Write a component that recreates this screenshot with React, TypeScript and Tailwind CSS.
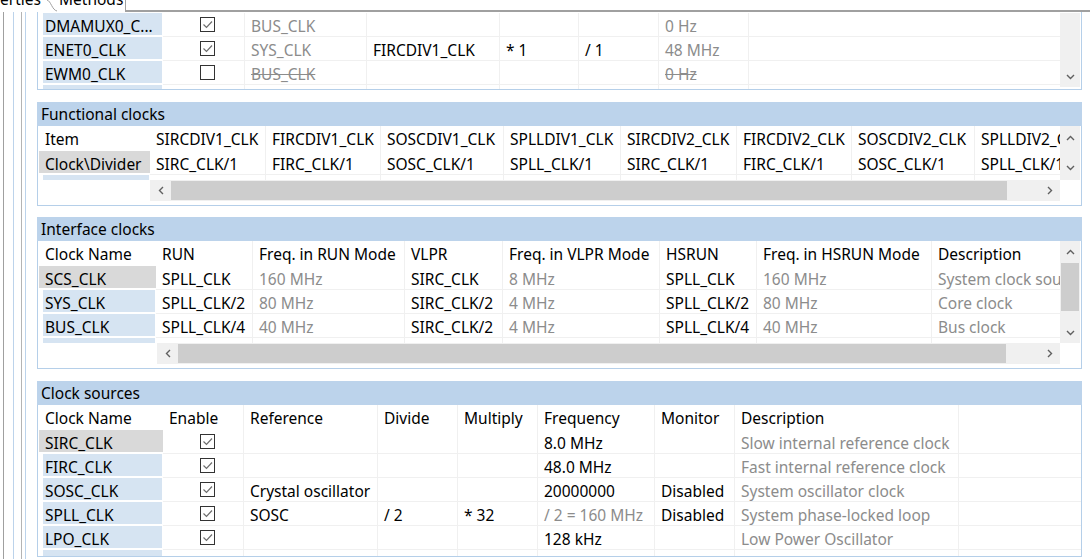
import type { ReactNode } from 'react'

// 공통 색
const LINE = 'border-[#f0f0f0]'
const GRAY = 'text-[#8c8c8c]'

type Tone = 'black' | 'gray' | 'strike'
type Dir = 'up' | 'down' | 'left' | 'right'

function toneClass(t?: Tone) {
  if (t === 'gray') return GRAY
  if (t === 'strike') return `${GRAY} line-through`
  return 'text-black'
}

function Chevron({ dir }: { dir: Dir }) {
  const flat = dir === 'up' || dir === 'down'
  const pts = { up: '1,5 4.5,1.5 8,5', down: '1,1 4.5,4.5 8,1', left: '5,1 1.5,4.5 5,8', right: '1,1 4.5,4.5 1,8' }[dir]
  return (
    <svg width={flat ? 9 : 6} height={flat ? 6 : 9} viewBox={flat ? '0 0 9 6' : '0 0 6 9'}>
      <polyline points={pts} fill="none" stroke="#606060" strokeWidth="1.4" />
    </svg>
  )
}

function Btn({ dir, className }: { dir: Dir; className: string }) {
  return (
    <div className={`flex shrink-0 items-center justify-center ${className}`}>
      <Chevron dir={dir} />
    </div>
  )
}

function Check({ on }: { on: boolean }) {
  return (
    <span className="flex h-[15px] w-[15px] items-center justify-center border border-[#333] bg-white">
      {on && (
        <svg width="11" height="9" viewBox="0 0 11 9">
          <polyline points="1.5,4.5 4.5,7.5 10,1.5" fill="none" stroke="#6e6e6e" strokeWidth="1.2" />
        </svg>
      )}
    </span>
  )
}

function Cell({ w, children, tone, head, noRight }: { w: string; children?: ReactNode; tone?: Tone; head?: boolean; noRight?: boolean }) {
  return (
    <div
      className={`${w} flex shrink-0 items-center overflow-hidden whitespace-nowrap pl-[6px] ${noRight ? '' : 'border-r'} ${head ? '' : 'border-b pt-[2px]'} ${LINE} ${toneClass(tone)}`}
    >
      {children}
    </div>
  )
}

function CheckCell({ w, on }: { w: string; on: boolean }) {
  return (
    <div className={`${w} flex shrink-0 items-center border-r border-b ${LINE} pl-[37px]`}>
      <Check on={on} />
    </div>
  )
}

// 이름 칸: 선택된 행은 회색, 나머지는 옅은 파랑
function NameCell({ w, sel, children }: { w: string; sel?: boolean; children?: ReactNode }) {
  return (
    <div className={`${w} flex shrink-0 pb-[2px] ${sel ? 'pl-[1px]' : 'pl-[5px] pr-[1px]'}`}>
      <div
        className={`flex min-w-0 flex-1 items-center overflow-hidden whitespace-nowrap pt-[3px] ${sel ? 'bg-[#d9d9d9] pl-[6px]' : 'bg-[#d6e4f2] pl-[2px]'}`}
      >
        {children}
      </div>
    </div>
  )
}

// 스크롤로 잘린 마지막 행
function PartialRow({ cols, h }: { cols: string[]; h: string }) {
  return (
    <div className={`flex ${h} overflow-hidden`}>
      <div className={`${cols[0]} flex shrink-0 pl-[5px] pr-[1px]`}>
        <div className="flex-1 bg-[#d6e4f2]" />
      </div>
      {cols.slice(1).map((w, i) => (
        <div key={i} className={`${w} shrink-0 ${i === cols.length - 2 ? '' : 'border-r'} ${LINE}`} />
      ))}
    </div>
  )
}

function Section({ title, children }: { title: string; children: ReactNode }) {
  return (
    <div className="flex flex-col">
      <div className="flex h-[24px] items-center bg-[#bcd3eb] pl-[4px]">{title}</div>
      <div className="flex flex-col border-x border-b border-[#b5cfe9]">{children}</div>
    </div>
  )
}

/* ---------- 위쪽 peripheral 표 ---------- */
const TOP_COLS = ['w-[125px]', 'w-[82px]', 'w-[122px]', 'w-[133px]', 'w-[79px]', 'w-[80px]', 'w-[90px]', 'w-[311px]']
const TOP_ROWS = [
  { name: 'DMAMUX0_C...', on: true, src: 'BUS_CLK', ref: '', mul: '', div: '', freq: '0 Hz', off: false },
  { name: 'ENET0_CLK', on: true, src: 'SYS_CLK', ref: 'FIRCDIV1_CLK', mul: '* 1', div: '/ 1', freq: '48 MHz', off: false },
  { name: 'EWM0_CLK', on: false, src: 'BUS_CLK', ref: '', mul: '', div: '', freq: '0 Hz', off: true },
]

function TopTable() {
  const c = TOP_COLS
  return (
    <div className="flex flex-col border-x border-b border-[#b5cfe9]">
      <div className="flex">
        <div className="flex w-[1022px] flex-col">
          <div className="h-[1px]" />
          {TOP_ROWS.map((r) => (
            <div key={r.name} className="flex h-[24px]">
              <NameCell w={c[0]}>{r.name}</NameCell>
              <CheckCell w={c[1]} on={r.on} />
              <Cell w={c[2]} tone={r.off ? 'strike' : 'gray'}>{r.src}</Cell>
              <Cell w={c[3]}>{r.ref}</Cell>
              <Cell w={c[4]}>{r.mul}</Cell>
              <Cell w={c[5]}>{r.div}</Cell>
              <Cell w={c[6]} tone={r.off ? 'strike' : 'gray'}>{r.freq}</Cell>
              <Cell w={c[7]} noRight />
            </div>
          ))}
          <PartialRow cols={c} h="h-[4px]" />
        </div>
        <div className="mt-[1px] flex h-[74px] w-[20px] flex-col justify-end bg-[#f0f0f0]">
          <Btn dir="down" className="h-[21px]" />
        </div>
      </div>
    </div>
  )
}

/* ---------- Functional clocks ---------- */
const FN_COLS = ['w-[112px]', 'w-[116px]', 'w-[115px]', 'w-[123px]', 'w-[117px]', 'w-[116px]', 'w-[115px]', 'w-[123px]', 'w-[85px]']
const FN_ITEMS = ['SIRCDIV1_CLK', 'FIRCDIV1_CLK', 'SOSCDIV1_CLK', 'SPLLDIV1_CLK', 'SIRCDIV2_CLK', 'FIRCDIV2_CLK', 'SOSCDIV2_CLK', 'SPLLDIV2_CLK']
const FN_VALUES = ['SIRC_CLK/1', 'FIRC_CLK/1', 'SOSC_CLK/1', 'SPLL_CLK/1', 'SIRC_CLK/1', 'FIRC_CLK/1', 'SOSC_CLK/1', 'SPLL_CLK/1']

function FunctionalClocks() {
  const c = FN_COLS
  return (
    <Section title="Functional clocks">
      <div className="flex">
        <div className="flex w-[1022px] flex-col">
          <div className="flex h-[25px]">
            <div className={`${c[0]} flex shrink-0 items-center pl-[7px]`}>Item</div>
            {FN_ITEMS.map((t, i) => (
              <Cell key={i} w={c[i + 1]} head noRight={i === FN_ITEMS.length - 1}>
                {t}
              </Cell>
            ))}
          </div>
          <div className="flex h-[24px]">
            <NameCell w={c[0]} sel>
              Clock\Divider
            </NameCell>
            {FN_VALUES.map((t, i) => (
              <Cell key={i} w={c[i + 1]} noRight={i === FN_VALUES.length - 1}>
                {t}
              </Cell>
            ))}
          </div>
          <PartialRow cols={c} h="h-[5px]" />
        </div>
        <div className="flex h-[54px] w-[20px] flex-col justify-between bg-[#f0f0f0]">
          <Btn dir="up" className="h-[24px]" />
          <Btn dir="down" className="h-[24px]" />
        </div>
      </div>
      <div className="flex h-[21px]">
        <div className="w-[112px] shrink-0" />
        <div className="flex w-[910px] shrink-0 bg-[#f0f0f0]">
          <Btn dir="left" className="w-[21px]" />
          <div className="my-[1px] w-[836px] shrink-0 bg-[#cdcdcd]" />
          <div className="flex-1" />
          <Btn dir="right" className="w-[21px]" />
        </div>
      </div>
      <div className="h-[4px]" />
    </Section>
  )
}

/* ---------- Interface clocks ---------- */
const IF_COLS = ['w-[118px]', 'w-[97px]', 'w-[152px]', 'w-[98px]', 'w-[157px]', 'w-[97px]', 'w-[175px]', 'w-[128px]']
const IF_HEAD = ['RUN', 'Freq. in RUN Mode', 'VLPR', 'Freq. in VLPR Mode', 'HSRUN', 'Freq. in HSRUN Mode', 'Description']
const IF_ROWS = [
  { name: 'SCS_CLK', v: ['SPLL_CLK', '160 MHz', 'SIRC_CLK', '8 MHz', 'SPLL_CLK', '160 MHz', 'System clock source'] },
  { name: 'SYS_CLK', v: ['SPLL_CLK/2', '80 MHz', 'SIRC_CLK/2', '4 MHz', 'SPLL_CLK/2', '80 MHz', 'Core clock'] },
  { name: 'BUS_CLK', v: ['SPLL_CLK/4', '40 MHz', 'SIRC_CLK/2', '4 MHz', 'SPLL_CLK/4', '40 MHz', 'Bus clock'] },
]

function InterfaceClocks() {
  const c = IF_COLS
  return (
    <Section title="Interface clocks">
      <div className="flex">
        <div className="flex w-[1022px] flex-col">
          <div className="flex h-[25px]">
            <div className={`${c[0]} flex shrink-0 items-center pl-[7px]`}>Clock Name</div>
            {IF_HEAD.map((t, i) => (
              <Cell key={t} w={c[i + 1]} head noRight={i === IF_HEAD.length - 1}>
                {t}
              </Cell>
            ))}
          </div>
          {IF_ROWS.map((r, ri) => (
            <div key={r.name} className="flex h-[24px]">
              <NameCell w={c[0]} sel={ri === 0}>
                {r.name}
              </NameCell>
              {r.v.map((t, i) => (
                <Cell key={i} w={c[i + 1]} tone={i % 2 === 1 || i === 6 ? 'gray' : 'black'} noRight={i === 6}>
                  {t}
                </Cell>
              ))}
            </div>
          ))}
          <PartialRow cols={c} h="h-[5px]" />
        </div>
        <div className="flex h-[102px] w-[20px] flex-col bg-[#f0f0f0]">
          <Btn dir="up" className="h-[21px]" />
          <div className="mx-[1px] mt-[1px] h-[48px] bg-[#cdcdcd]" />
          <div className="flex-1" />
          <Btn dir="down" className="h-[21px]" />
        </div>
      </div>
      <div className="flex h-[21px]">
        <div className="w-[119px] shrink-0" />
        <div className="flex w-[903px] shrink-0 bg-[#f0f0f0]">
          <Btn dir="left" className="w-[21px]" />
          <div className="my-[1px] w-[828px] shrink-0 bg-[#cdcdcd]" />
          <div className="flex-1" />
          <Btn dir="right" className="w-[21px]" />
        </div>
      </div>
      <div className="h-[4px]" />
    </Section>
  )
}

/* ---------- Clock sources ---------- */
const CS_COLS = ['w-[125px]', 'w-[81px]', 'w-[134px]', 'w-[80px]', 'w-[80px]', 'w-[117px]', 'w-[80px]', 'w-[224px]', 'w-[122px]']
const CS_HEAD = ['Enable', 'Reference', 'Divide', 'Multiply', 'Frequency', 'Monitor', 'Description']
const CS_ROWS = [
  { name: 'SIRC_CLK', ref: '', div: '', mul: '', freq: '8.0 MHz', fg: false, mon: '', desc: 'Slow internal reference clock' },
  { name: 'FIRC_CLK', ref: '', div: '', mul: '', freq: '48.0 MHz', fg: false, mon: '', desc: 'Fast internal reference clock' },
  { name: 'SOSC_CLK', ref: 'Crystal oscillator', div: '', mul: '', freq: '20000000', fg: false, mon: 'Disabled', desc: 'System oscillator clock' },
  { name: 'SPLL_CLK', ref: 'SOSC', div: '/ 2', mul: '* 32', freq: '/ 2 = 160 MHz', fg: true, mon: 'Disabled', desc: 'System phase-locked loop' },
  { name: 'LPO_CLK', ref: '', div: '', mul: '', freq: '128 kHz', fg: false, mon: '', desc: 'Low Power Oscillator' },
]

function ClockSources() {
  const c = CS_COLS
  return (
    <Section title="Clock sources">
      <div className="flex h-[25px]">
        <div className={`${c[0]} flex shrink-0 items-center pl-[7px]`}>Clock Name</div>
        {CS_HEAD.map((t, i) => (
          <Cell key={t} w={c[i + 1]} head>
            {t}
          </Cell>
        ))}
        <div className={`${c[8]} shrink-0`} />
      </div>
      {CS_ROWS.map((r, ri) => (
        <div key={r.name} className="flex h-[24px]">
          <NameCell w={c[0]} sel={ri === 0}>
            {r.name}
          </NameCell>
          <CheckCell w={c[1]} on />
          <Cell w={c[2]}>{r.ref}</Cell>
          <Cell w={c[3]}>{r.div}</Cell>
          <Cell w={c[4]}>{r.mul}</Cell>
          <Cell w={c[5]} tone={r.fg ? 'gray' : 'black'}>
            {r.freq}
          </Cell>
          <Cell w={c[6]}>{r.mon}</Cell>
          <Cell w={c[7]} tone="gray">
            {r.desc}
          </Cell>
          <Cell w={c[8]} noRight />
        </div>
      ))}
      <PartialRow cols={c} h="h-[6px]" />
    </Section>
  )
}

export default function App() {
  return (
    <div className="flex h-[559px] w-[1090px] flex-col overflow-hidden bg-white font-['Noto_Sans',sans-serif] text-[15.5px] leading-[20px] text-black">
      {/* 탭 줄 (위가 잘려 있음) */}
      <div className="flex h-[12px] shrink-0">
        <div className="w-[47px] shrink-0 overflow-hidden">
          <div className="-mt-[11px] whitespace-nowrap">erties</div>
        </div>
        <svg width="10" height="12" viewBox="0 0 10 12" className="shrink-0">
          <path d="M0 0 C4 1, 5 10, 10 11" fill="none" stroke="#a0a0a0" strokeWidth="1" />
        </svg>
        <div className="w-[68px] shrink-0 overflow-hidden pl-[2px]">
          <div className="-mt-[11px] whitespace-nowrap">Methods</div>
        </div>
        <div className="flex-1 border-b-2 border-l border-[#a0a0a0]" />
      </div>

      <div className="flex min-h-0 flex-1">
        {/* 왼쪽 중첩 패널 테두리들 */}
        <div className="flex shrink-0">
          <div className="w-[3px]" />
          <div className="w-px bg-[#a0a0a0]" />
          <div className="w-[9px]" />
          <div className="w-px bg-[#bcd3eb]" />
          <div className="w-[7px]" />
          <div className="w-px bg-[#b4b4b4]" />
          <div className="w-[3px]" />
          <div className="w-px bg-[#bcd3eb]" />
          <div className="w-[11px]" />
        </div>

        <div className="flex w-[1045px] shrink-0 flex-col">
          <TopTable />
          <div className="mt-[12px]">
            <FunctionalClocks />
          </div>
          <div className="mt-[11px]">
            <InterfaceClocks />
          </div>
          <div className="mt-[12px]">
            <ClockSources />
          </div>
        </div>
      </div>
    </div>
  )
}
